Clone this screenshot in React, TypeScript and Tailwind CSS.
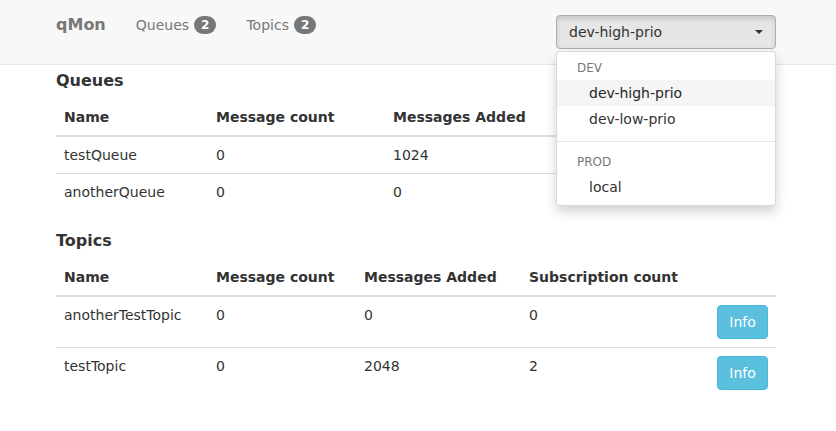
import React from "react";

const font = { fontFamily: '"DejaVu Sans", "Liberation Sans", sans-serif' };

function Badge({ n }: { n: number }) {
  return (
    <span className="ml-[5px] inline-block min-w-[10px] rounded-[10px] bg-[#777] px-[7px] py-[3px] text-center text-[12px] font-bold leading-none text-white">
      {n}
    </span>
  );
}

const th = "border-b-2 border-[#ddd] p-2 text-left align-bottom font-bold leading-5";
const td = "border-t border-[#ddd] p-2 align-top leading-5";

export default function App() {
  return (
    <div className="relative min-h-[431px] bg-white text-[14px] leading-5 text-[#333]" style={font}>
      {/* Navbar */}
      <div className="h-[65px] border-b border-[#e7e7e7] bg-[#f8f8f8]">
        <div className="flex h-full items-start justify-between pl-[41px] pr-[60px]">
          <div className="flex items-center">
            <span className="px-[15px] py-[15px] text-[16px] font-bold leading-5 text-[#777]">qMon</span>
            <span className="flex items-center px-[15px] py-[15px] text-[#777]">
              Queues<Badge n={2} />
            </span>
            <span className="flex items-center px-[15px] py-[15px] text-[#777]">
              Topics<Badge n={2} />
            </span>
          </div>
          <div className="mt-[15px] flex h-[34px] w-[220px] items-center justify-between rounded-[4px] border border-[#adadad] bg-[#e6e6e6] pl-[12px] pr-[12px] shadow-[inset_0_3px_5px_rgba(0,0,0,0.125)]">
            <span>dev-high-prio</span>
            <span className="inline-block h-0 w-0 border-x-[4px] border-t-[4px] border-x-transparent border-t-[#333]" />
          </div>
        </div>
      </div>

      {/* Dropdown menu */}
      <div className="absolute left-[556px] top-[51px] w-[220px] rounded-[4px] border border-[rgba(0,0,0,0.15)] bg-white py-[5px] shadow-[0_6px_12px_rgba(0,0,0,0.175)]">
        <div className="px-[20px] py-[3px] text-[12px] leading-[17px] text-[#777]">DEV</div>
        <div className="bg-[#f5f5f5] py-[3px] pl-[32px] pr-[20px] leading-5 text-[#262626]">dev-high-prio</div>
        <div className="py-[3px] pl-[32px] pr-[20px] leading-5 text-[#333]">dev-low-prio</div>
        <div className="my-[9px] h-px bg-[#e5e5e5]" />
        <div className="px-[20px] py-[3px] text-[12px] leading-[17px] text-[#777]">PROD</div>
        <div className="py-[3px] pl-[32px] pr-[20px] leading-5 text-[#333]">local</div>
      </div>

      {/* Content */}
      <div className="ml-[56px] w-[720px]">
        <h4 className="mt-[6px] text-[16px] leading-5 font-bold">Queues</h4>
        <table className="mt-[8px] mb-[21px] w-[720px] table-fixed border-collapse">
          <colgroup>
            <col className="w-[152px]" />
            <col className="w-[177px]" />
            <col />
          </colgroup>
          <thead>
            <tr>
              <th className={th}>Name</th>
              <th className={th}>Message count</th>
              <th className={th}>Messages Added</th>
            </tr>
          </thead>
          <tbody>
            <tr>
              <td className={td}>testQueue</td>
              <td className={td}>0</td>
              <td className={td}>1024</td>
            </tr>
            <tr>
              <td className={td}>anotherQueue</td>
              <td className={td}>0</td>
              <td className={td}>0</td>
            </tr>
          </tbody>
        </table>

        <h4 className="text-[16px] leading-5 font-bold">Topics</h4>
        <table className="mt-[8px] w-[720px] table-fixed border-collapse">
          <colgroup>
            <col className="w-[152px]" />
            <col className="w-[148px]" />
            <col className="w-[165px]" />
            <col className="w-[188px]" />
            <col />
          </colgroup>
          <thead>
            <tr>
              <th className={th}>Name</th>
              <th className={th}>Message count</th>
              <th className={th}>Messages Added</th>
              <th className={th}>Subscription count</th>
              <th className={th}></th>
            </tr>
          </thead>
          <tbody>
            {[
              ["anotherTestTopic", "0", "0", "0"],
              ["testTopic", "0", "2048", "2"],
            ].map((r) => (
              <tr key={r[0]}>
                <td className={td}>{r[0]}</td>
                <td className={td}>{r[1]}</td>
                <td className={td}>{r[2]}</td>
                <td className={td}>{r[3]}</td>
                <td className={td + " text-right"}>
                  <button className="w-[51px] rounded-[4px] border border-[#46b8da] bg-[#5bc0de] py-[6px] text-center leading-5 text-white">
                    Info
                  </button>
                </td>
              </tr>
            ))}
          </tbody>
        </table>
      </div>
    </div>
  );
}
